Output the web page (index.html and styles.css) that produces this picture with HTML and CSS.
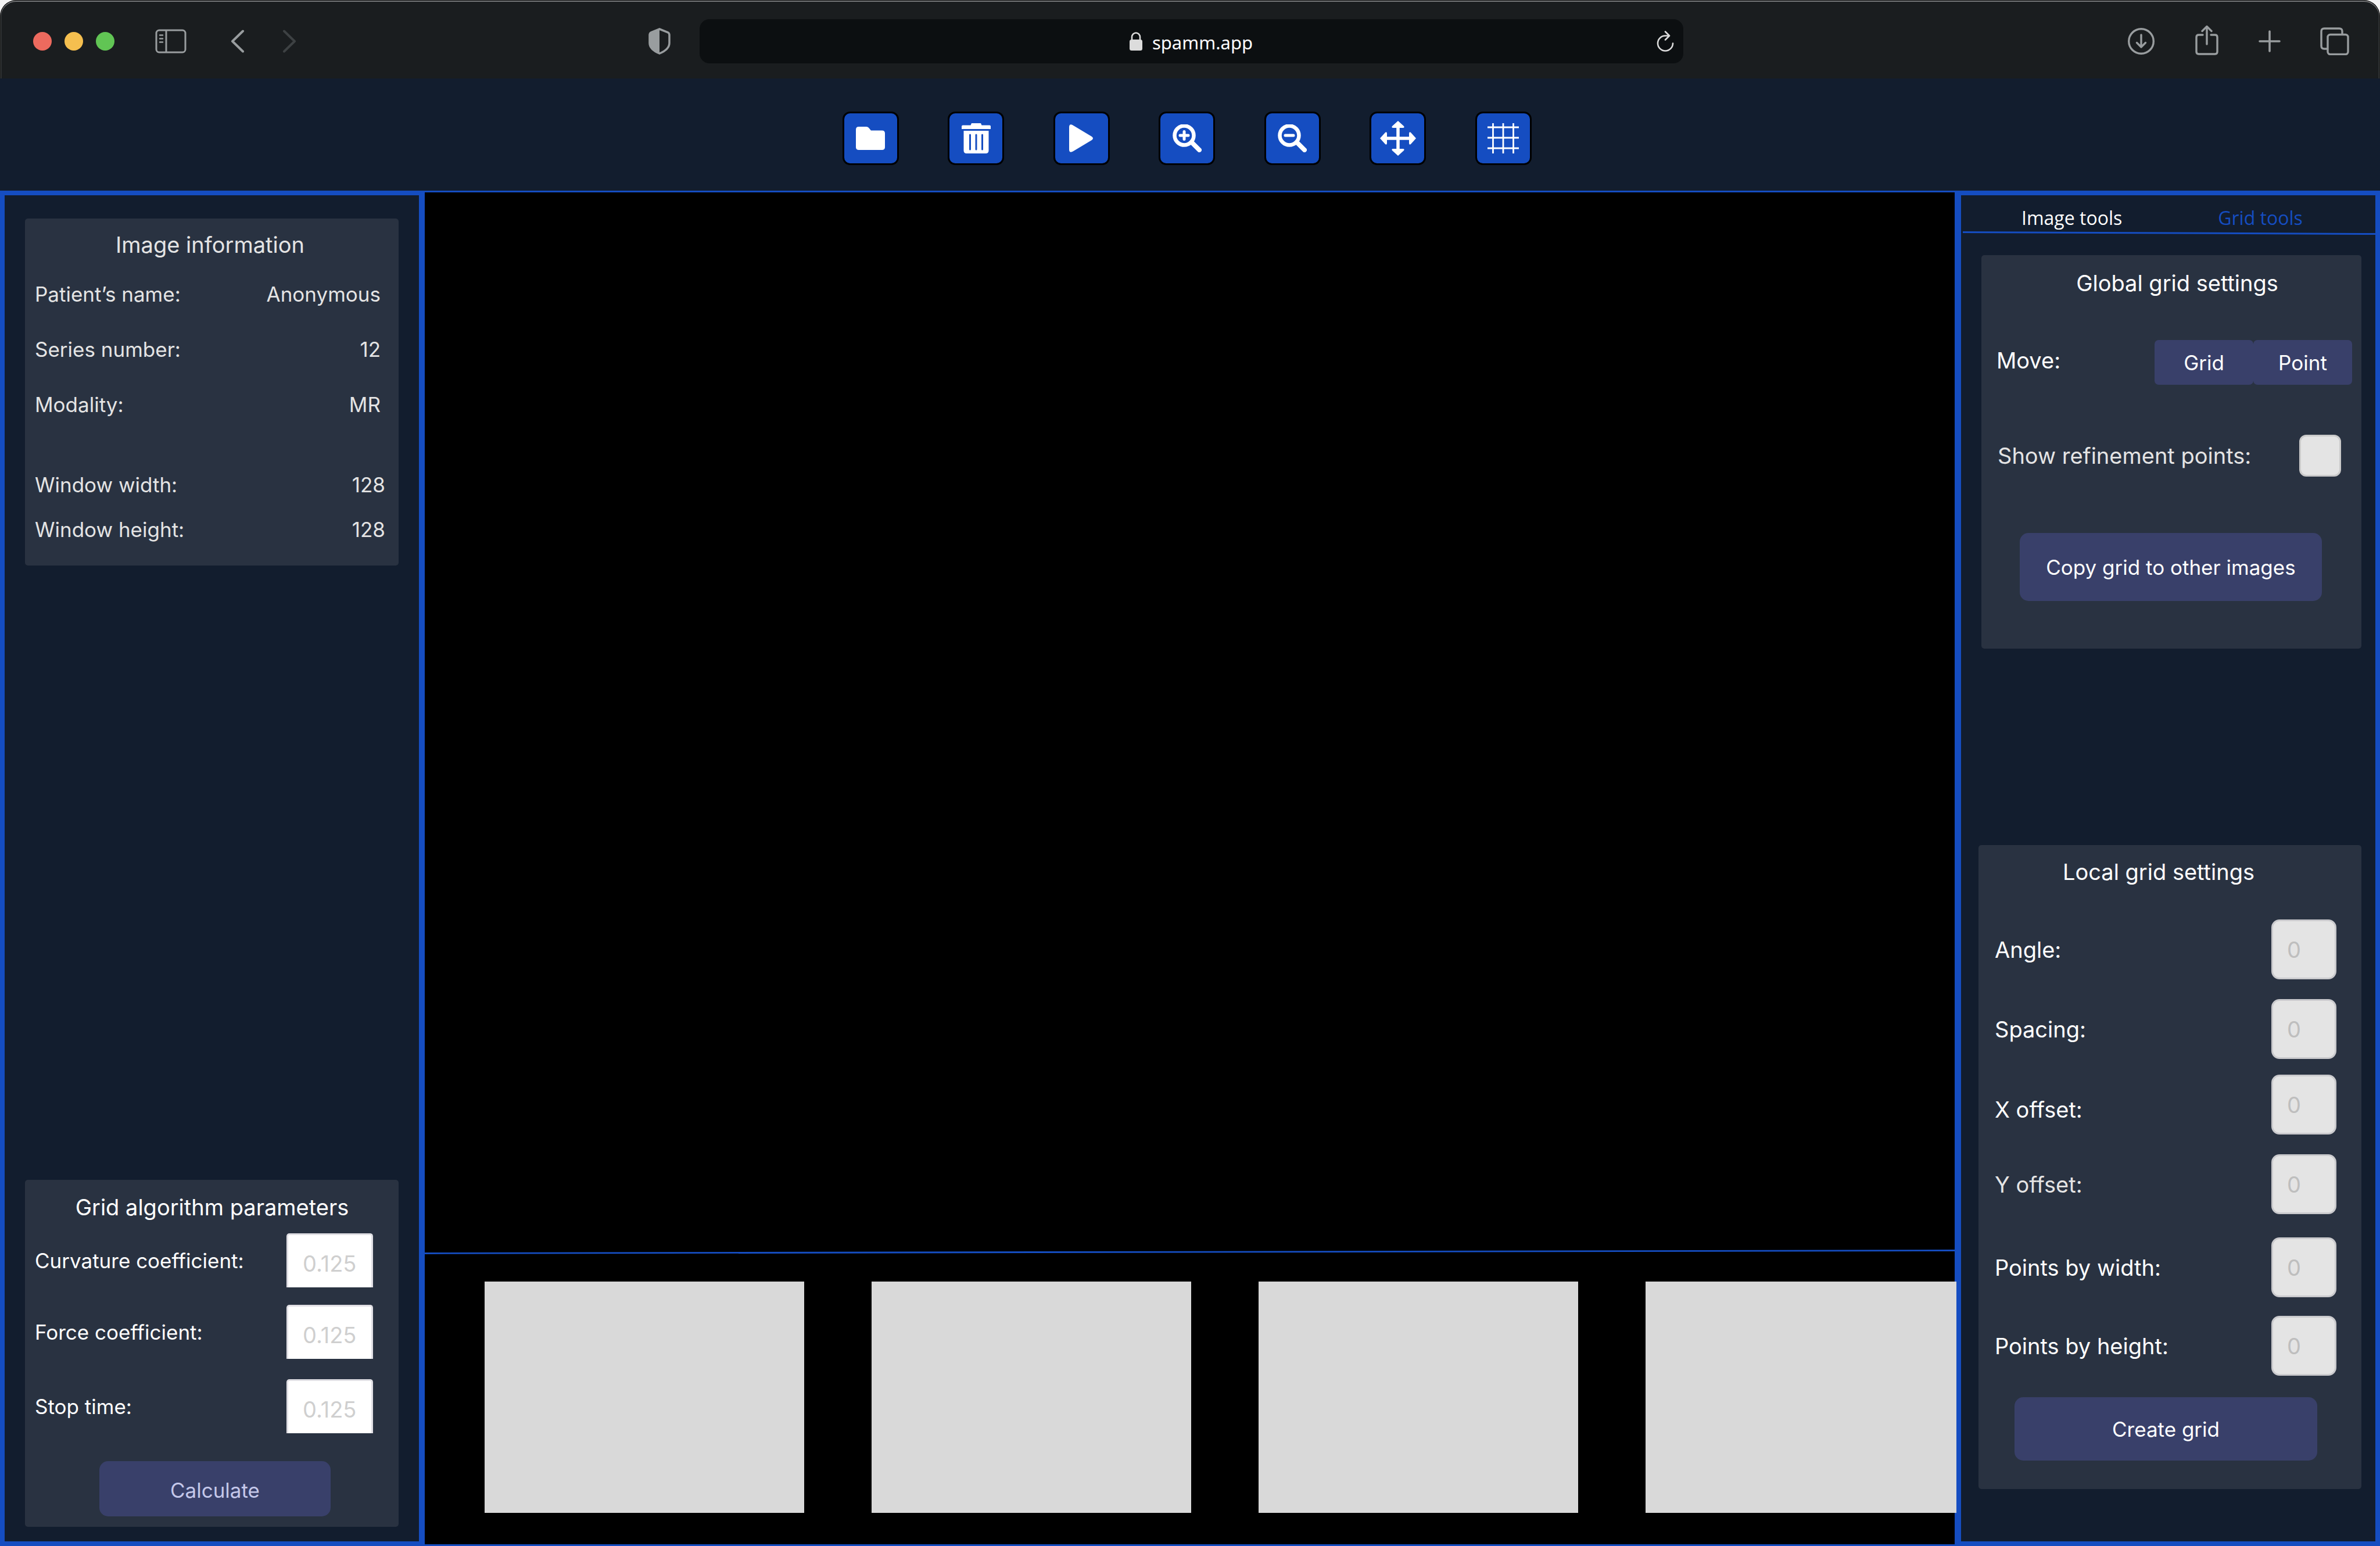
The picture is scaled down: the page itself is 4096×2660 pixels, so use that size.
FILE: index.html
```html
<!DOCTYPE html>
<html lang="en">
<head>
<meta charset="utf-8">
<title>spamm.app</title>
<link rel="stylesheet" href="styles.css">
</head>
<body>
<header class="chrome">
  <div class="chrome-side">
    <div class="lights"><span class="light light-close"></span><span class="light light-min"></span><span class="light light-max"></span></div>
    <button class="icon-btn nav-sidebar" aria-label="Show sidebar">
      <svg width="54" height="42" viewBox="0 0 54 42" fill="none" stroke="#999d9f" stroke-width="3"><rect x="2" y="2" width="50" height="38" rx="5"/><path d="M19 2v38"/><path d="M8 10.500h5M8 16.500h5M8 22.500h5" stroke-linecap="round" stroke-width="2.500"/></svg>
    </button>
    <button class="icon-btn nav-back" aria-label="Back">
      <svg width="24" height="40" viewBox="0 0 24 40" fill="none" stroke="#999d9f" stroke-width="4" stroke-linecap="round" stroke-linejoin="round"><path d="M21 2.500 3 20l18 17.500"/></svg>
    </button>
    <button class="icon-btn" aria-label="Forward" disabled>
      <svg width="24" height="40" viewBox="0 0 24 40" fill="none" stroke="#3d4143" stroke-width="4" stroke-linecap="round" stroke-linejoin="round"><path d="M3 2.500 21 20 3 37.500"/></svg>
    </button>
    <button class="icon-btn shield" aria-label="Privacy report">
      <svg width="38" height="46" viewBox="0 0 38 46"><path d="M19 2 33 7.500Q36 9 36 12v14Q36 37 19 44Q2 37 2 26V12Q2 9 5 7.500Z" fill="none" stroke="#999d9f" stroke-width="3.500"/><path d="M19 1v44Q1 37 1 26V11Q1 8 4 7Z" fill="#999d9f"/></svg>
    </button>
  </div>
  <div class="address">
    <span class="address-text">
      <svg width="22" height="32" viewBox="0 0 22 32"><path d="M4 15V9a7 7.500 0 0 1 14 0v6" fill="none" stroke="#dcdcdc" stroke-width="2.600"/><rect x="0" y="13" width="22" height="19" rx="3.500" fill="#dcdcdc"/></svg>
      spamm.app
    </span>
    <button class="icon-btn reload" aria-label="Reload">
      <svg width="30" height="36" viewBox="0 0 30 36" fill="none" stroke="#dcdcdc" stroke-width="2.600" stroke-linecap="round" stroke-linejoin="round"><path d="M21 8.500H15A13 13 0 1 0 28 21.500M15 1.500l7 7-7 7"/></svg>
    </button>
  </div>
  <div class="chrome-side chrome-end">
    <button class="icon-btn" aria-label="Downloads">
      <svg width="48" height="48" viewBox="0 0 48 48" fill="none" stroke="#999d9f" stroke-width="3.400" stroke-linecap="round" stroke-linejoin="round"><circle cx="24" cy="24" r="21.300"/><path d="M24 13v20M16.500 26.500 24 34l7.500-7.500"/></svg>
    </button>
    <button class="icon-btn share" aria-label="Share">
      <svg width="42" height="52" viewBox="0 0 42 52" fill="none" stroke="#999d9f" stroke-width="3.400" stroke-linecap="round" stroke-linejoin="round"><path d="M14 17H7q-4 0-4 4v25q0 4 4 4h28q4 0 4-4V21q0-4-4-4h-7M21 33V3M13 10.500 21 2.500l8 8"/></svg>
    </button>
    <button class="icon-btn" aria-label="New tab">
      <svg width="38" height="38" viewBox="0 0 38 38" fill="none" stroke="#999d9f" stroke-width="3.600" stroke-linecap="round"><path d="M19 2v34M2 19h34"/></svg>
    </button>
    <button class="icon-btn" aria-label="Show all tabs">
      <svg width="50" height="48" viewBox="0 0 50 48" fill="none" stroke="#999d9f" stroke-width="3.400" stroke-linejoin="round"><rect x="13" y="12.500" width="35" height="34" rx="4.500"/><path d="M38 12.500V7q0-5-5-5H7Q2 2 2 7v25q0 5 5 5h6"/></svg>
    </button>
  </div>
</header>

<nav class="toolbar" aria-label="Image actions">
  <div class="tools">
    <button class="tool" aria-label="Open folder"><svg width="50" height="40" viewBox="0 0 50 40"><path d="M5 0h13q2.500 0 4 1.800L26 6.500h19q5 0 5 5V35q0 5-5 5H5q-5 0-5-5V5Q0 0 5 0Z" fill="#fff"/></svg></button>
    <button class="tool" aria-label="Delete"><svg width="50" height="52" viewBox="0 0 50 52"><path d="M17 0h16l1.500 3.500H48q2 0 2 2V10H0V5.500q0-2 2-2h13.500ZM3.500 13h43v34q0 5-5 5h-33q-5 0-5-5Z" fill="#fff"/><path d="M14.500 20v25M25 20v25M35.500 20v25" stroke="#154dc1" stroke-width="3" stroke-linecap="round"/></svg></button>
    <button class="tool" aria-label="Play"><svg width="42" height="48" viewBox="0 0 42 48"><path d="M0 5Q0-2 6.500 1.500L39 21q4 3 0 6L6.500 46.500Q0 50 0 43Z" fill="#fff"/></svg></button>
    <button class="tool" aria-label="Zoom in"><svg width="50" height="48" viewBox="0 0 50 48" fill="none" stroke="#fff"><circle cx="20" cy="19" r="16.500" stroke-width="6.500"/><path d="M33 31 46 44" stroke-width="8" stroke-linecap="round"/><path d="M20 12.500v13M13 19h14" stroke-width="5" stroke-linecap="round"/></svg></button>
    <button class="tool" aria-label="Zoom out"><svg width="50" height="48" viewBox="0 0 50 48" fill="none" stroke="#fff"><circle cx="20" cy="19" r="16.500" stroke-width="6.500"/><path d="M33 31 46 44" stroke-width="8" stroke-linecap="round"/><path d="M13 19h14" stroke-width="5" stroke-linecap="round"/></svg></button>
    <button class="tool" aria-label="Move"><svg width="64" height="62" viewBox="0 0 64 62"><path d="M32 10v42M9 31h46" stroke="#fff" stroke-width="5.500"/><path d="M32 1 42 10q2 3-2 3H24q-4 0-2-3ZM32 61l10-9q2-3-2-3H24q-4 0-2 3ZM1 31l9-10q3-2 3 2v16q0 4-3 2ZM63 31l-9-10q-3-2-3 2v16q0 4 3 2Z" fill="#fff"/></svg></button>
    <button class="tool" aria-label="Grid"><svg width="54" height="52" viewBox="0 0 54 52" stroke="#fff" stroke-width="2.800"><path d="M9.500 0v52M27 0v52M44.500 0v52M0 7h54M0 25h54M0 43h54"/></svg></button>
  </div>
</nav>

<main class="workspace">
  <aside class="panel panel-left">
    <section class="card card-info">
      <h2 class="card-title">Image information</h2>
      <dl class="facts">
        <div class="fact"><dt>Patient’s name:</dt><dd>Anonymous</dd></div>
        <div class="fact"><dt>Series number:</dt><dd>12</dd></div>
        <div class="fact"><dt>Modality:</dt><dd>MR</dd></div>
      </dl>
      <dl class="facts facts-window">
        <div class="fact"><dt>Window width:</dt><dd>128</dd></div>
        <div class="fact"><dt>Window height:</dt><dd>128</dd></div>
      </dl>
    </section>
    <form class="card card-params">
      <h2 class="card-title">Grid algorithm parameters</h2>
      <div class="params">
        <div class="param"><label for="curvature">Curvature coefficient:</label><input id="curvature" class="param-input" type="text" placeholder="0.125"></div>
        <div class="param"><label for="force">Force coefficient:</label><input id="force" class="param-input" type="text" placeholder="0.125"></div>
        <div class="param"><label for="stop">Stop time:</label><input id="stop" class="param-input" type="text" placeholder="0.125"></div>
      </div>
      <button class="btn btn-calculate" type="button">Calculate</button>
    </form>
  </aside>

  <section class="stage">
    <div class="viewer"></div>
    <svg class="stage-line" viewBox="0 0 100 8" preserveAspectRatio="none" aria-hidden="true"><path d="M0 6.500 100 1.500" stroke="#154dc1" stroke-width="2.800" vector-effect="non-scaling-stroke"/></svg>
    <div class="strip">
      <div class="thumb"></div><div class="thumb"></div><div class="thumb"></div><div class="thumb"></div>
    </div>
  </section>

  <aside class="panel panel-right">
    <nav class="tabs"><a class="tab" href="#image-tools">Image tools</a><a class="tab tab-active" href="#grid-tools">Grid tools</a></nav>
    <svg class="tabs-line" viewBox="0 0 100 6" preserveAspectRatio="none" aria-hidden="true"><path d="M0 1.500 100 4.500" stroke="#154dc1" stroke-width="3" vector-effect="non-scaling-stroke"/></svg>
    <form class="card card-global">
      <h2 class="card-title">Global grid settings</h2>
      <div class="setting setting-move"><span>Move:</span><div class="toggle"><button class="btn btn-toggle" type="button">Grid</button><button class="btn btn-toggle" type="button">Point</button></div></div>
      <div class="setting setting-show"><label for="refine">Show refinement points:</label><input id="refine" class="check" type="checkbox"></div>
      <button class="btn btn-copy" type="button">Copy grid to other images</button>
    </form>
    <form class="card card-local">
      <h2 class="card-title">Local grid settings</h2>
      <div class="fields">
        <div class="field"><label for="angle">Angle:</label><input id="angle" class="field-input" type="text" placeholder="0"></div>
        <div class="field"><label for="spacing">Spacing:</label><input id="spacing" class="field-input" type="text" placeholder="0"></div>
        <div class="field field-low"><label for="xoff">X offset:</label><input id="xoff" class="field-input" type="text" placeholder="0"></div>
        <div class="field field-muted"><label for="yoff">Y offset:</label><input id="yoff" class="field-input" type="text" placeholder="0"></div>
        <div class="field"><label for="pwidth">Points by width:</label><input id="pwidth" class="field-input" type="text" placeholder="0"></div>
        <div class="field"><label for="pheight">Points by height:</label><input id="pheight" class="field-input" type="text" placeholder="0"></div>
      </div>
      <button class="btn btn-create" type="button">Create grid</button>
    </form>
  </aside>
</main>
</body>
</html>
```
FILE: styles.css
```css
:root {
  --blue: #154dc1;
  --navy: #121d2e;
  --card: #293241;
  --violet: #39406a;
  --muted: #e4e4e4;
}

* {
  box-sizing: border-box;
}

body {
  margin: 0;
  min-height: 100vh;
  display: flex;
  flex-direction: column;
  background: #f4f4f4;
  color: #fff;
  font-family: Inter, "Liberation Sans", sans-serif;
  font-size: 35px;
  line-height: 48px;
}

button,
input {
  margin: 0;
  padding: 0;
  border: 0;
  font: inherit;
  color: inherit;
}

svg {
  display: block;
}

/* Browser bar */
.chrome {
  height: 135px;
  display: flex;
  align-items: center;
  border: 1px solid #000;
  border-bottom: 0;
  border-radius: 28px 28px 0 0;
  background: #1a1d1f;
  box-shadow: inset 0 2px 0 #77787a, inset 1px 0 0 #55585a, inset -1px 0 0 #55585a;
  padding: 5px 52px 0 56px;
}

.chrome-side {
  flex: 1;
  display: flex;
  align-items: center;
}

.lights {
  display: flex;
  gap: 22px;
}

.light {
  width: 32px;
  height: 32px;
  border-radius: 50%;
}

.light-close { background: #ed6a5e; }
.light-min { background: #f5bf4f; }
.light-max { background: #61c554; }

.icon-btn {
  background: none;
}

.nav-sidebar { margin-left: 70px; }
.nav-back { margin: 0 65px 0 76px; }

.shield {
  margin: 0 50px 0 auto;
}

.address {
  width: 1693px;
  height: 76px;
  display: grid;
  grid-template-columns: 1fr auto 1fr;
  align-items: center;
  border-radius: 17px;
  background: #0c0f11;
}

.address-text {
  grid-column: 2;
  display: flex;
  align-items: center;
  gap: 17px;
  padding-top: 4px;
  font-family: "Noto Sans", sans-serif;
  font-size: 31px;
}

.address-text svg {
  margin-bottom: 4px;
}

.reload {
  justify-self: end;
  margin-right: 16px;
}

.chrome-end {
  justify-content: flex-end;
  gap: 68px;
}

.share {
  margin-bottom: 4px;
}

/* Action bar */
.toolbar {
  height: 196px;
  display: flex;
  justify-content: center;
  padding: 57px 11px 0 0;
  border-bottom: 3px solid var(--blue);
  background: var(--navy);
}

.tools {
  width: 1186px;
  display: flex;
  justify-content: space-between;
}

.tool {
  width: 97px;
  height: 92px;
  display: grid;
  place-items: center;
  border: 3px solid #000;
  border-radius: 13px;
  background: var(--blue);
}

/* Work area */
.workspace {
  flex: 1;
  display: flex;
  background: #000;
}

.panel {
  flex: none;
  display: flex;
  flex-direction: column;
  border: 8px solid var(--blue);
  border-top-width: 5px;
  background: var(--navy);
}

.panel-left {
  width: 731px;
  border-right-width: 10px;
  justify-content: space-between;
  padding: 40px 35px 25px;
}

.panel-right {
  width: 732px;
  border-left-width: 11px;
}

.card {
  border-radius: 5px;
  background: var(--card);
}

.card-title {
  margin: 0;
  font-size: 38px;
  font-weight: 400;
  text-align: center;
}

.card-info {
  height: 597px;
  padding: 21px 23px 0 17px;
  color: var(--muted);
}

.facts {
  margin: 0;
  padding: 37px 8px 0 0;
  display: grid;
  gap: 47px;
}

.facts-window {
  padding: 90px 0 0;
  gap: 29px;
}

.fact {
  display: flex;
  justify-content: space-between;
}

.fact dd {
  margin: 0;
}

.card-params {
  height: 597px;
  padding: 23px 44px 0 17px;
}

.card-params .card-title {
  padding-left: 28px;
}

.params {
  display: grid;
  grid-template-rows: 123px 128px 93px;
  align-items: start;
  padding-top: 21px;
}

.param {
  display: flex;
  justify-content: space-between;
  align-items: center;
}

.param-input {
  width: 149px;
  height: 93px;
  padding: 8px 0 0 25px;
  border: 3px solid #e0dfe4;
  border-bottom: 0;
  border-radius: 5px 5px 0 0;
  background: #fff;
  font-size: 38px;
}

.param-input::placeholder {
  color: #cfcfcf;
}

.btn {
  display: block;
  background: var(--violet);
  border-radius: 15px;
  text-align: center;
}

.btn-calculate {
  width: 398px;
  height: 95px;
  margin: 48px 0 0 111px;
  padding-top: 4px;
  color: #c5c8ea;
}

/* Viewer */
.stage {
  flex: 1;
  min-width: 0;
  display: flex;
  flex-direction: column;
  border-bottom: 3px solid var(--blue);
}

.viewer {
  flex: 1;
}

.stage-line {
  width: 100%;
  height: 8px;
}

/* The film strip runs slightly over the edge of the right panel */
.strip {
  position: relative;
  z-index: 1;
  display: flex;
  gap: 116px;
  margin-right: -3px;
  padding: 47px 0 54px 103px;
  overflow: hidden;
}

.thumb {
  flex: none;
  width: 550px;
  height: 398px;
  background: #d9d9d9;
}

/* Grid tools */
.tabs {
  display: flex;
  gap: 165px;
  padding: 16px 0 0 104px;
}

.tab {
  font-family: "Open Sans", sans-serif;
  font-size: 32px;
  line-height: 46px;
  color: #fff;
  text-decoration: none;
}

.tab-active {
  color: var(--blue);
}

.tabs-line {
  width: 710px;
  height: 6px;
  margin-left: 3px;
}

.card-global {
  height: 677px;
  margin: 35px 24px 0 35px;
  padding: 24px 16px 0 26px;
  font-size: 38px;
}

.card-global .card-title {
  padding-left: 10px;
}

.setting {
  display: flex;
  justify-content: space-between;
  align-items: center;
}

.setting-move {
  align-items: flex-start;
  padding-top: 74px;
  line-height: 70px;
}

.toggle {
  display: flex;
}

.btn-toggle {
  width: 170px;
  height: 77px;
  border-radius: 7px;
  font-size: 35px;
}

.setting-show {
  padding: 86px 19px 0 2px;
  color: var(--muted);
}

.check {
  appearance: none;
  width: 72px;
  height: 72px;
  border: 3px solid #cacaca;
  border-radius: 12px;
  background: #e4e4e4;
}

.btn-copy {
  width: 520px;
  height: 117px;
  margin: 97px 0 0 40px;
  font-size: 35px;
}

.card-local {
  height: 1108px;
  margin: auto 24px 90px 30px;
  padding: 22px 43px 0 28px;
  font-size: 38px;
}

.card-local .card-title {
  padding-right: 24px;
}

.fields {
  display: grid;
  grid-template-rows: 137px 130px 137px 143px 135px 103px;
  align-items: start;
  padding-top: 58px;
}

.field {
  display: flex;
  justify-content: space-between;
  align-items: center;
  line-height: 86px;
}

.field-low {
  align-items: flex-end;
}

.field-muted {
  color: var(--muted);
}

.field-input {
  width: 112px;
  height: 103px;
  padding-left: 24px;
  border: 3px solid #cacacd;
  border-radius: 14px;
  background: #e4e4e4;
}

.field-input::placeholder {
  color: #bebebe;
}

.btn-create {
  width: 521px;
  height: 109px;
  margin: 37px 0 0 34px;
  font-size: 35px;
}
```
